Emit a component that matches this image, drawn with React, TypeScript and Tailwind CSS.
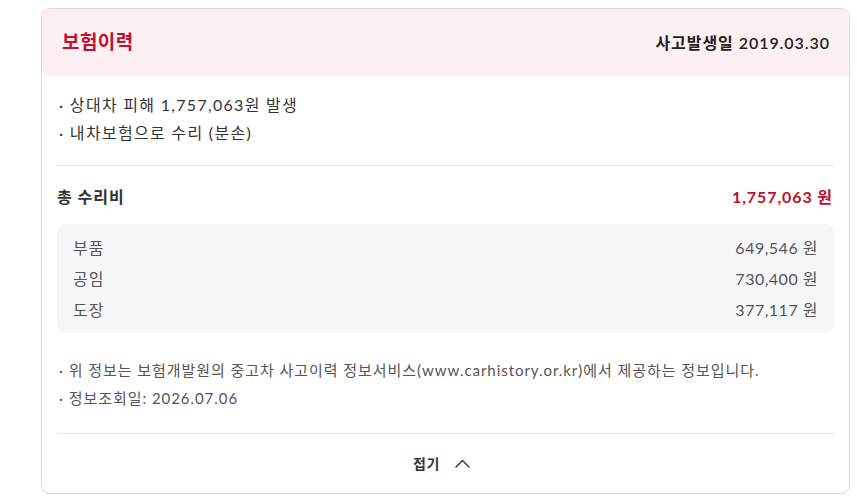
import React from "react";

const font = { fontFamily: "Lato, 'Noto Sans CJK KR', 'Noto Sans', sans-serif" };

export default function App() {
  return (
    <div className="w-[857px] h-[504px] bg-white pt-[8px] pl-[41px]" style={font}>
      <div className="w-[809px] h-[486px] rounded-[9px] border border-[#f3cdd4] overflow-hidden flex flex-col">
        <div className="h-[67px] bg-[#fcf0f2] flex items-center justify-between pl-[20px] pr-[19px]">
          <span className="text-[19px] font-bold text-[#c0102f] tracking-[0.4px]">보험이력</span>
          <span className="text-[16px] font-semibold text-[#222] tracking-[0.95px]">사고발생일 2019.03.30</span>
        </div>
        <div className="px-[15px] flex flex-col">
          <div className="pt-[15px] pb-[18px] pl-[2px] text-[16px] leading-[28px] text-[#333] tracking-[1.3px]">
            <div>· 상대차 피해 1,757,063원 발생</div>
            <div>· 내차보험으로 수리 (분손)</div>
          </div>
          <div className="h-px bg-[#dfe4ec]" />
          <div className="pt-[20px] h-[58px] flex items-start justify-between">
            <span className="text-[16px] leading-[22px] font-bold text-[#333] tracking-[1px]">총 수리비</span>
            <span className="text-[16px] leading-[22px] font-bold text-[#c0102f] tracking-[0.9px] pr-[1px]">1,757,063 원</span>
          </div>
          <div className="bg-[#f6f7f9] rounded-[8px] py-[8px] px-[16px] text-[16px] text-[#555] tracking-[0.5px]">
            <div className="h-[31px] flex items-center justify-between"><span className="tracking-[1px]">부품</span><span>649,546 원</span></div>
            <div className="h-[31px] flex items-center justify-between"><span className="tracking-[1px]">공임</span><span>730,400 원</span></div>
            <div className="h-[31px] flex items-center justify-between"><span className="tracking-[1px]">도장</span><span>377,117 원</span></div>
          </div>
          <div className="pt-[23px] pb-[21px] pl-[2px] text-[15px] leading-[28px] text-[#555] tracking-[0.95px]">
            <div>· 위 정보는 보험개발원의 중고차 사고이력 정보서비스(www.carhistory.or.kr)에서 제공하는 정보입니다.</div>
            <div>· 정보조회일: 2026.07.06</div>
          </div>
          <div className="h-px bg-[#dfe4ec]" />
          <div className="h-[59px] flex items-center justify-center gap-[15px] text-[14px] font-semibold text-[#333] pr-[8px]">
            <span className="tracking-[0.5px]">접기</span>
            <svg width="15" height="9" viewBox="0 0 15 9" fill="none" stroke="#444" strokeWidth="1.6" strokeLinecap="round" strokeLinejoin="round">
              <path d="M1 8 L7.5 1.5 L14 8" />
            </svg>
          </div>
        </div>
      </div>
    </div>
  );
}
